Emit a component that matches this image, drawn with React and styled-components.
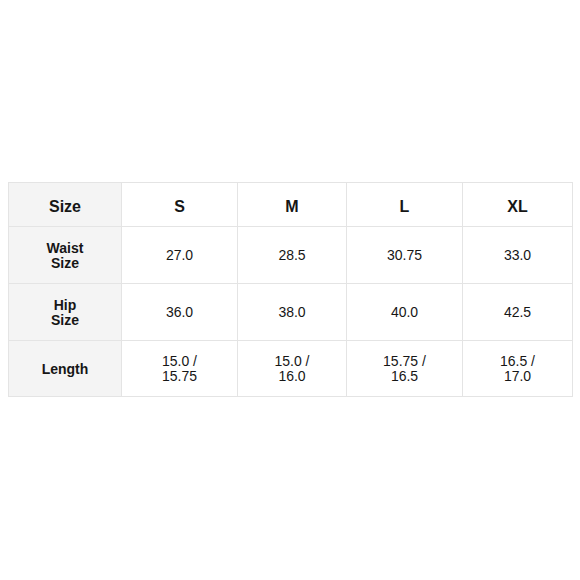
import styled, { createGlobalStyle } from "styled-components"

const Global = createGlobalStyle`
  body {
    margin: 0;
    background: #ffffff;
    font-family: "Liberation Sans", Arial, sans-serif;
    color: #161616;
  }
`;

const Page = styled.div`
  width: 580px;
  height: 580px;
  padding: 182px 8px 0;
  box-sizing: border-box;
`;

const Table = styled.table`
  width: 564px;
  border-collapse: collapse;
  table-layout: fixed;
  border: 1px solid #e4e4e4;
`;

const Cell = styled.td`
  border: 1px solid #e4e4e4;
  text-align: center;
  vertical-align: middle;
  padding: ${p => (p.$head ? "4px 6px 0" : "1px 6px 0")};
  font-size: ${p => (p.$head ? "16px" : "14px")};
  font-weight: ${p => (p.$label || p.$head ? "bold" : "normal")};
  line-height: 15px;
  background: ${p => (p.$label ? "#f4f4f4" : "#ffffff")};
`;

const Row = styled.tr`
  height: ${p => p.$h}px;
`;

const widths = [113, 116, 109, 116, 110]

const rows = [
  { h: 44, head: true, cells: ["Size", "S", "M", "L", "XL"] },
  { h: 57, cells: [["Waist", "Size"], "27.0", "28.5", "30.75", "33.0"] },
  { h: 57, cells: [["Hip", "Size"], "36.0", "38.0", "40.0", "42.5"] },
  { h: 56, cells: ["Length", ["15.0 /", "15.75"], ["15.0 /", "16.0"], ["15.75 /", "16.5"], ["16.5 /", "17.0"]] },
]

function lines(v){
  if(Array.isArray(v)){
    return v.map((t, i) => <div key={i}>{t}</div>)
  }
  return v
}

export default function App(){
  return(
    <>
      <Global />
      <Page>
        <Table>
          <colgroup>
            {widths.map((w, i) => <col key={i} style={{ width: w }} />)}
          </colgroup>
          <tbody>
            {rows.map((r, ri) => (
              <Row key={ri} $h={r.h}>
                {r.cells.map((c, ci) => (
                  <Cell key={ci} $label={ci === 0} $head={r.head}>{lines(c)}</Cell>
                ))}
              </Row>
            ))}
          </tbody>
        </Table>
      </Page>
    </>
  )
}
